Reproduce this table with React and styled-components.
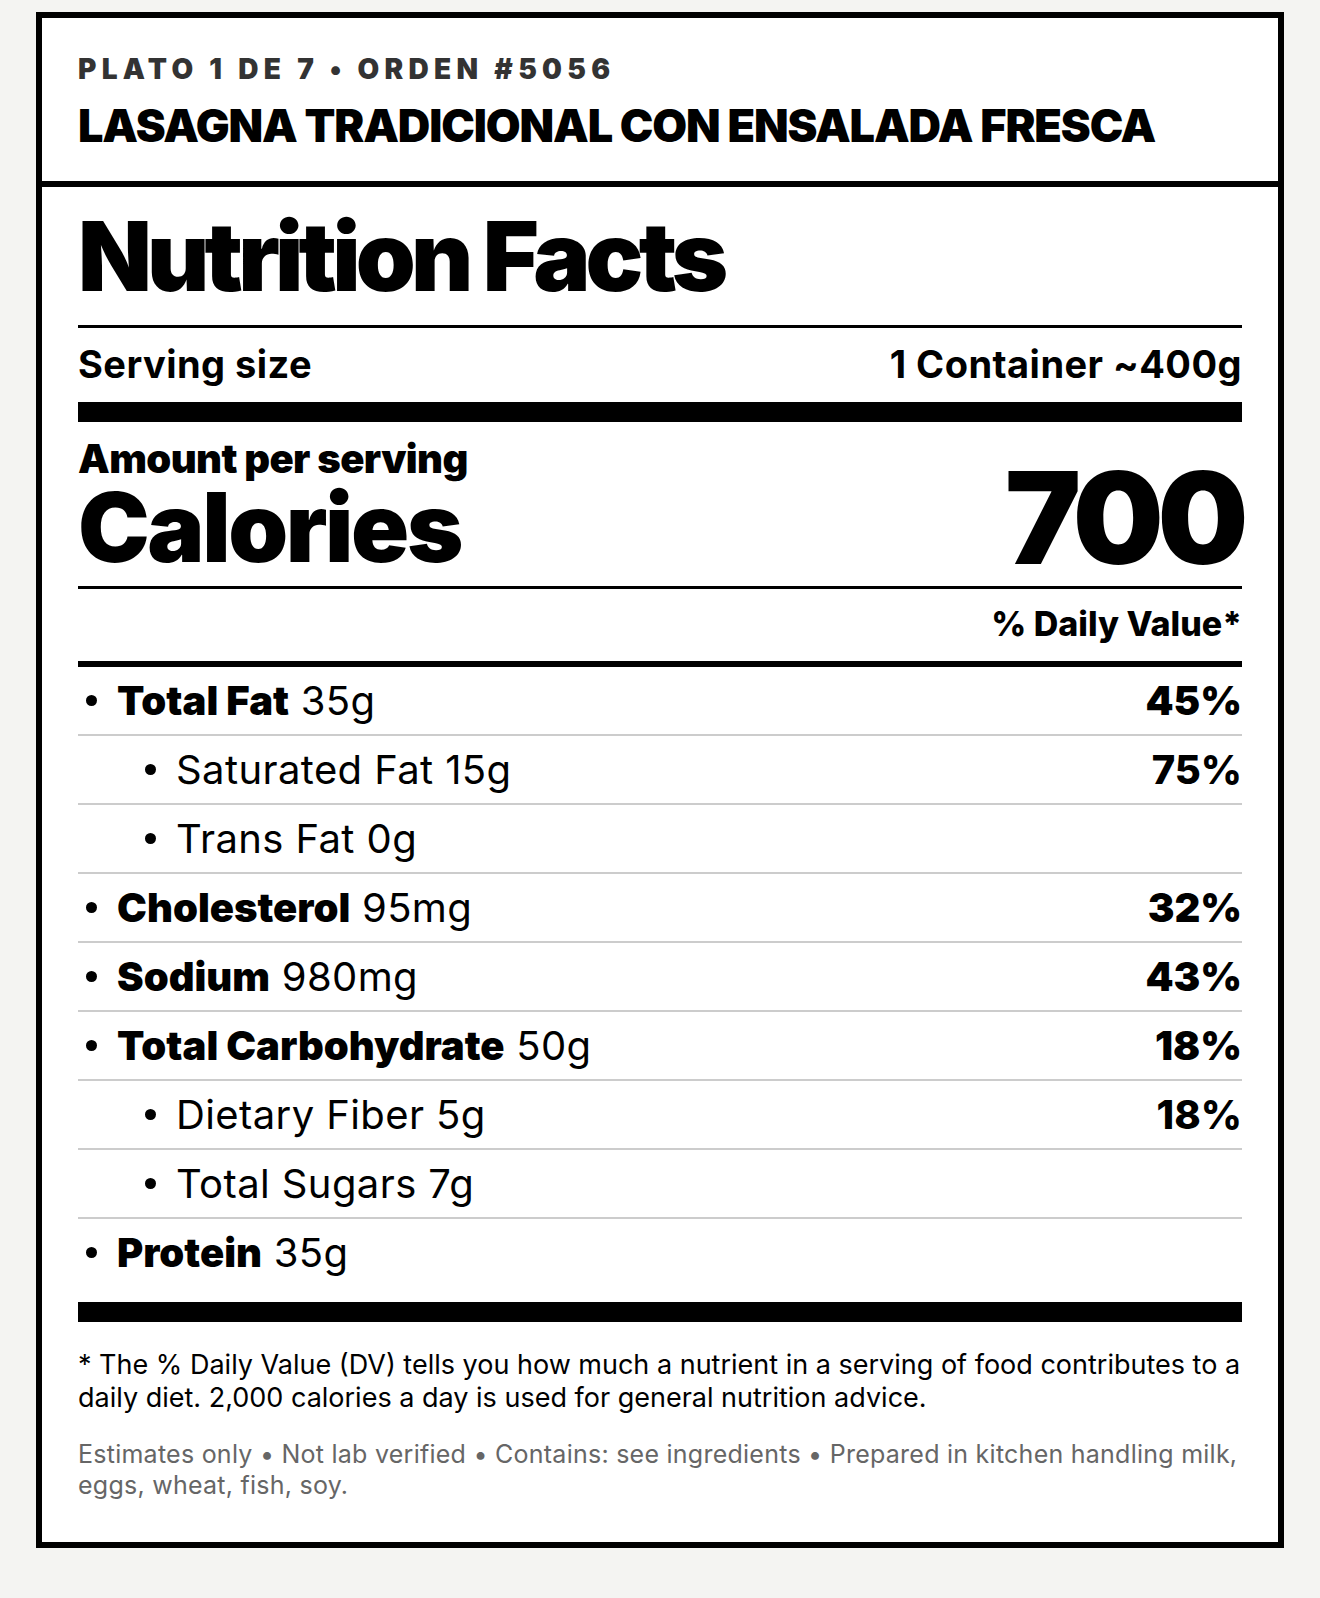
import styled, { createGlobalStyle } from 'styled-components'

const GlobalStyle = createGlobalStyle`
  html, body {
    margin: 0;
    background: #f4f4f2;
  }
  body {
    font-family: Inter, 'Noto Sans', sans-serif;
    color: #000;
  }
`

const nutrients = [
  { name: 'Total Fat', amount: '35g', dv: '45%' },
  { name: 'Saturated Fat', amount: '15g', dv: '75%', sub: true },
  { name: 'Trans Fat', amount: '0g', sub: true },
  { name: 'Cholesterol', amount: '95mg', dv: '32%' },
  { name: 'Sodium', amount: '980mg', dv: '43%' },
  { name: 'Total Carbohydrate', amount: '50g', dv: '18%' },
  { name: 'Dietary Fiber', amount: '5g', dv: '18%', sub: true },
  { name: 'Total Sugars', amount: '7g', sub: true },
  { name: 'Protein', amount: '35g' },
]

const App = () => {
  return (
    <Page>
      <GlobalStyle />
      <Label>
        <Header>
          <Meta>PLATO 1 DE 7 • ORDEN #5056</Meta>
          <Dish>LASAGNA TRADICIONAL CON ENSALADA FRESCA</Dish>
        </Header>
        <Body>
          <Title>Nutrition Facts</Title>
          <Rule $h={3} $mt={21} />
          <Serving>
            <span>Serving size</span>
            <span>1 Container ~400g</span>
          </Serving>
          <Rule $h={20} />
          <CaloriesBlock>
            <div>
              <Amount>Amount per serving</Amount>
              <Calories>Calories</Calories>
            </div>
            <CalorieCount>700</CalorieCount>
          </CaloriesBlock>
          <Rule $h={3} $mt={11} />
          <DvHead>% Daily Value*</DvHead>
          <Rule $h={6} />
          <List>
            {nutrients.map((n) => (
              <Row key={n.name} $sub={n.sub}>
                <Bullet />
                <Name>
                  {n.sub ? n.name : <strong>{n.name}</strong>} {n.amount}
                </Name>
                {n.dv && <Dv $sub={n.sub}>{n.dv}</Dv>}
              </Row>
            ))}
          </List>
          <Rule $h={20} $mt={16} />
          <Footnote>
            * The % Daily Value (DV) tells you how much a nutrient in a serving of food
            contributes to a daily diet. 2,000 calories a day is used for general nutrition
            advice.
          </Footnote>
          <Disclaimer>
            Estimates only • Not lab verified • Contains: see ingredients • Prepared in
            kitchen handling milk, eggs, wheat, fish, soy.
          </Disclaimer>
        </Body>
      </Label>
    </Page>
  )
}

export default App

const Page = styled.div`
  padding: 12px 36px 50px;
`

const Label = styled.article`
  background: #fff;
  border: 6px solid #000;
`

const Header = styled.header`
  padding: 37px 36px 33px;
  border-bottom: 6px solid #000;
`

const Meta = styled.div`
  font-size: 28px;
  font-weight: 900;
  letter-spacing: 0.19em;
  line-height: 1;
  color: #333;
`

const Dish = styled.h1`
  margin: 20px 0 0;
  font-size: 45px;
  font-weight: 900;
  letter-spacing: -0.025em;
  line-height: 1;
`

const Body = styled.section`
  padding: 21px 36px 41px;
`

const Title = styled.h2`
  margin: 0;
  font-size: 96px;
  font-weight: 900;
  letter-spacing: -0.05em;
  line-height: 1;
`

const Rule = styled.div`
  height: ${(p) => p.$h}px;
  margin-top: ${(p) => p.$mt || 0}px;
  background: #000;
`

const Serving = styled.div`
  display: flex;
  justify-content: space-between;
  padding: 17px 0 19px;
  font-size: 38px;
  font-weight: 700;
  letter-spacing: 0.012em;
  line-height: 1;
`

const CaloriesBlock = styled.div`
  display: flex;
  justify-content: space-between;
  align-items: flex-end;
  padding-top: 17px;
`

const Amount = styled.div`
  font-size: 40px;
  font-weight: 900;
  letter-spacing: -0.015em;
  line-height: 1;
`

const Calories = styled.div`
  font-size: 96px;
  font-weight: 900;
  letter-spacing: -0.025em;
  line-height: 1;
`

const CalorieCount = styled.div`
  font-size: 128px;
  font-weight: 900;
  letter-spacing: -0.05em;
  line-height: 0.9;
`

const DvHead = styled.div`
  padding: 18px 0 20px;
  text-align: right;
  font-size: 34px;
  font-weight: 800;
  line-height: 1;
`

const List = styled.ul`
  margin: 0;
  padding: 0;
  list-style: none;
`

const Row = styled.li`
  display: flex;
  align-items: center;
  height: 67px;
  padding-left: ${(p) => (p.$sub ? 59 : 0)}px;
  border-bottom: 2px solid #cccccc;

  &:last-child {
    border-bottom: none;
  }
`

const Bullet = styled.span`
  flex: none;
  width: 11px;
  height: 11px;
  margin: 0 20px 0 8px;
  border-radius: 50%;
  background: #000;
`

const Name = styled.span`
  flex: 1;
  font-size: 40px;
  font-weight: 400;
  letter-spacing: 0.01em;
  line-height: 1;

  strong {
    font-weight: 900;
    letter-spacing: 0;
  }
`

const Dv = styled.span`
  font-size: 40px;
  font-weight: ${(p) => (p.$sub ? 800 : 900)};
  line-height: 1;
`

const Footnote = styled.p`
  margin: 26px 0 0;
  font-size: 27px;
  line-height: 33px;
`

const Disclaimer = styled.p`
  margin: 25px 0 0;
  font-size: 25px;
  letter-spacing: 0.01em;
  line-height: 31px;
  color: #666;
`
